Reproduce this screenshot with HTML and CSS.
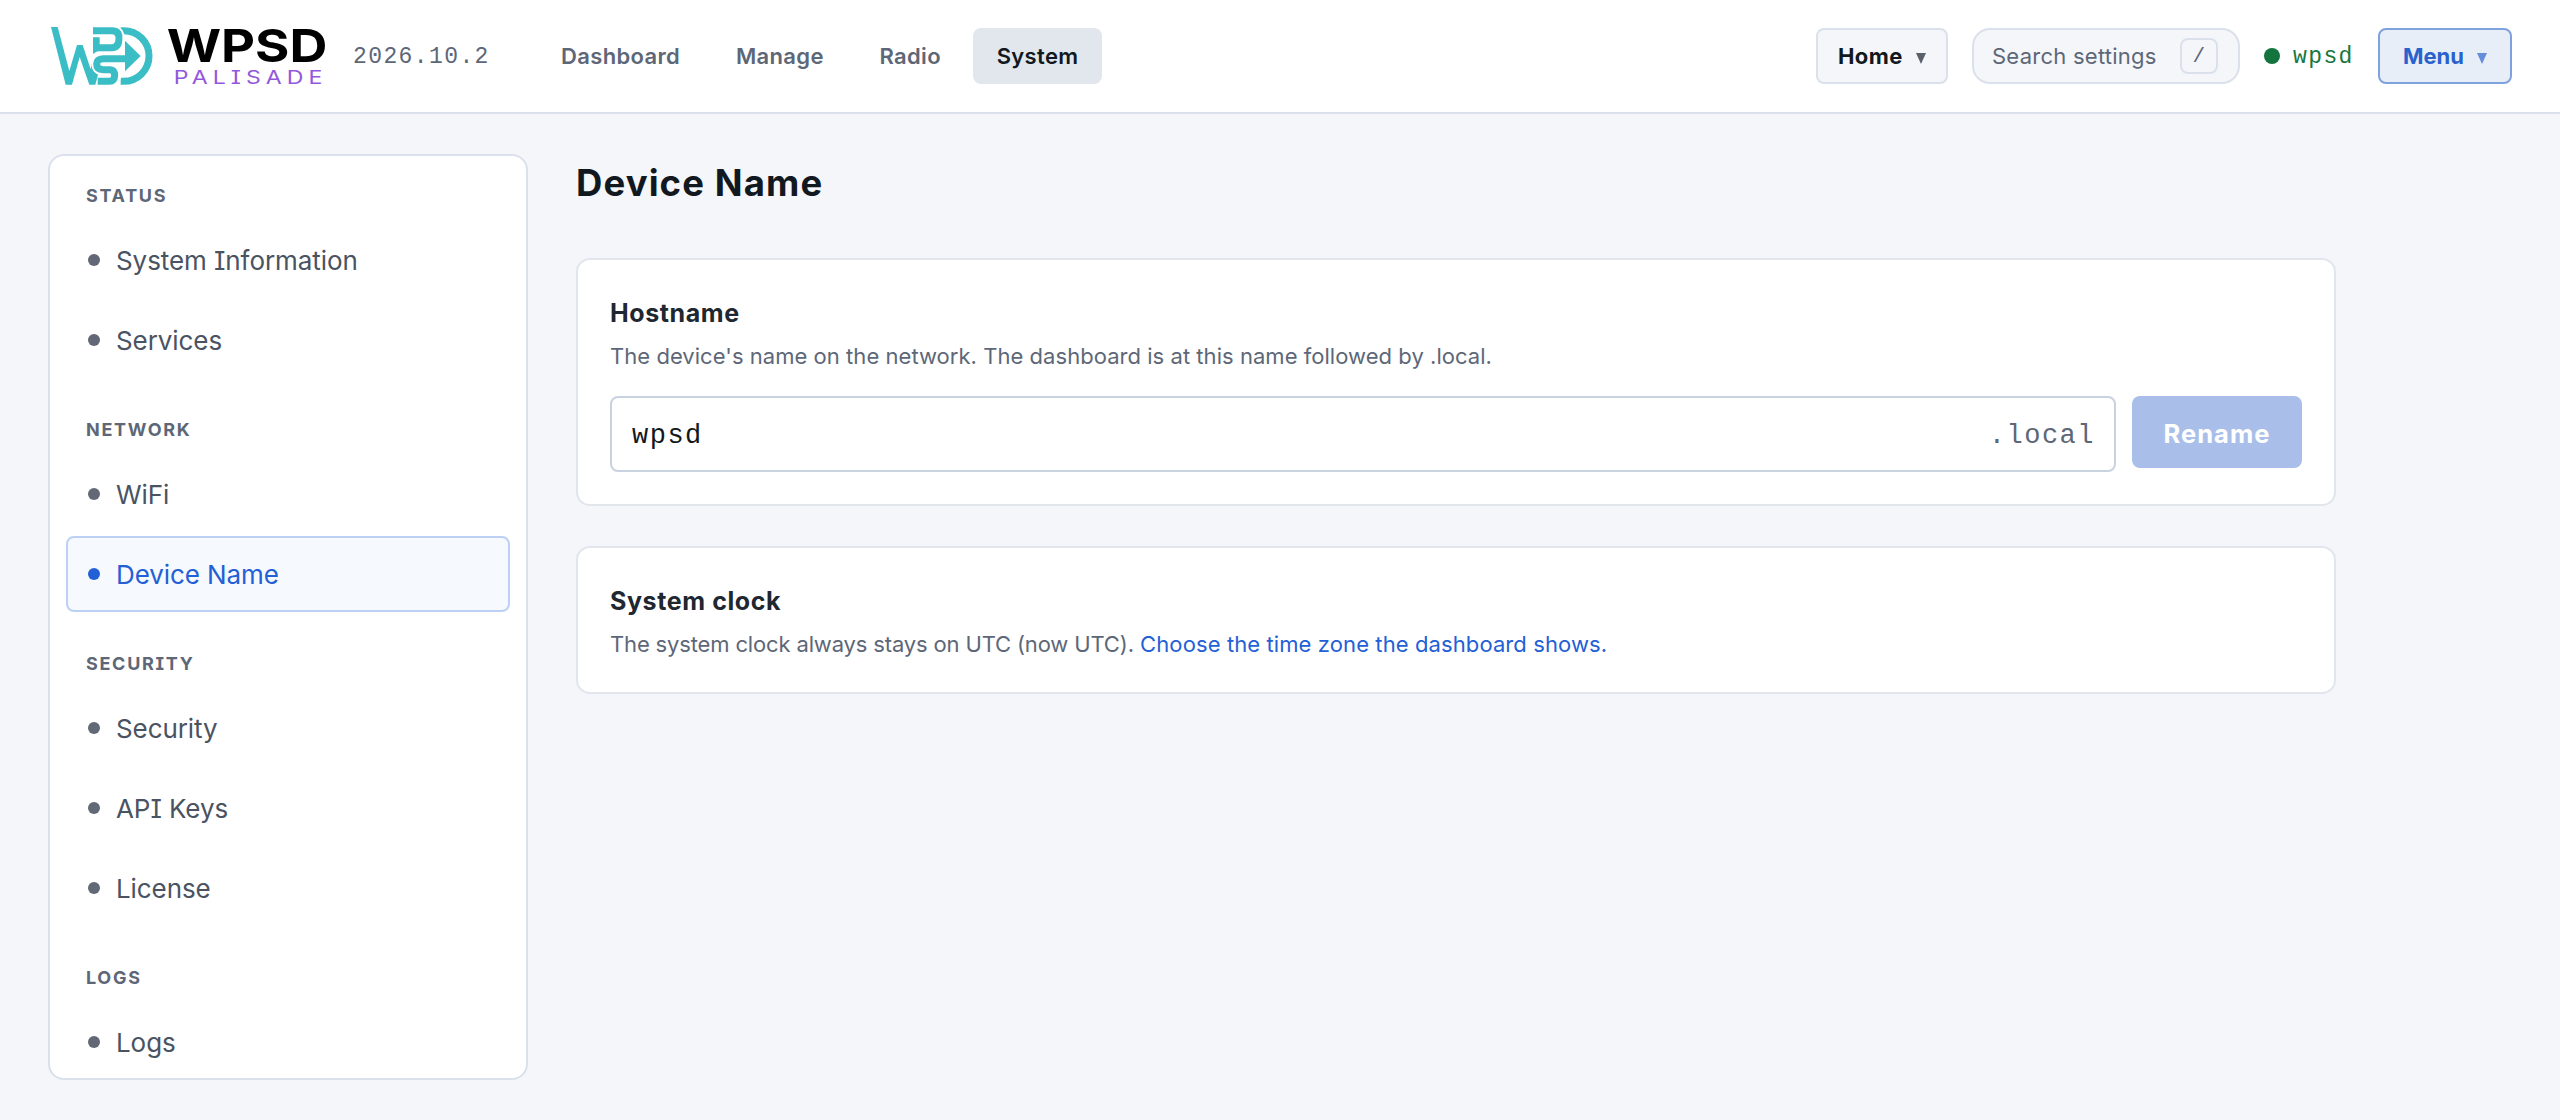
FILE: index.html
```
<!DOCTYPE html>
<html lang="en">
<head>
<meta charset="utf-8">
<title>Device Name</title>
<link rel="stylesheet" href="styles.css">
</head>
<body>
<header class="topbar">
  <svg class="logo" viewBox="54 45 840 186" role="img" aria-label="WPSD Palisade">
    <path class="mark-fill" d="M63 51H83L118 183 141 105H158L182 178 186 160 212 165 196 224H178L149 141 126 224H107Z"/>
    <path class="mark-line" d="M272 62H281A76 76 0 0 1 281 214H272"/>
    <path class="mark-gap" d="M189 62H246Q267 62 267 84Q267 113 246 113H205"/>
    <path class="mark-line" d="M189 62H246Q267 62 267 84Q267 113 246 113H205"/>
    <path class="mark-fill" d="M189 82H209V122Q197 124 189 132Z"/>
    <path class="mark-gap" d="M290 146H220Q201 147 201 161Q201 180 220 180H240Q257 181 257 196Q257 214 238 214H209"/>
    <path class="mark-gap-fill" d="M278 78L342 138 278 198Z"/>
    <path class="mark-line" d="M290 146H220Q200 147 200 162Q200 179 220 179H240Q254 180 254 196Q254 214 238 214H203"/>
    <path class="mark-fill" d="M285 92L332 138 285 184Z"/>
    <text class="logo-name" x="410" y="155" textLength="482" lengthAdjust="spacingAndGlyphs">WPSD</text>
    <text class="logo-edition" x="431" y="221" textLength="461" lengthAdjust="spacingAndGlyphs">PALISADE</text>
  </svg>
  <span class="version">2026.10.2</span>
  <nav class="nav">
    <a class="nav-link">Dashboard</a>
    <a class="nav-link">Manage</a>
    <a class="nav-link">Radio</a>
    <a class="nav-link active">System</a>
  </nav>
  <div class="tools">
    <button class="button home">Home<i class="caret"></i></button>
    <div class="search"><span>Search settings</span><kbd>/</kbd></div>
    <div class="host"><i class="host-dot"></i><span>wpsd</span></div>
    <button class="button menu">Menu<i class="caret"></i></button>
  </div>
</header>
<div class="layout">
  <aside class="sidebar">
    <h2>Status</h2>
    <a class="item">System Information</a>
    <a class="item">Services</a>
    <h2>Network</h2>
    <a class="item">WiFi</a>
    <a class="item current">Device Name</a>
    <h2>Security</h2>
    <a class="item">Security</a>
    <a class="item">API Keys</a>
    <a class="item">License</a>
    <h2>Logs</h2>
    <a class="item">Logs</a>
  </aside>
  <main class="content">
    <h1>Device Name</h1>
    <section class="card">
      <h3>Hostname</h3>
      <p>The device's name on the network. The dashboard is at this name followed by .local.</p>
      <div class="form">
        <div class="field"><span>wpsd</span><span class="suffix">.local</span></div>
        <button class="rename">Rename</button>
      </div>
    </section>
    <section class="card clock">
      <h3>System clock</h3>
      <p><span class="clock-note">The system clock always stays on UTC (now UTC).</span> <a>Choose the time zone the dashboard shows.</a></p>
    </section>
  </main>
</div>
</body>
</html>
```

FILE: styles.css
```
* { box-sizing: border-box; }
body {
  margin: 0;
  height: 1120px;
  overflow: hidden;
  background: #f4f6fa;
  color: #121820;
  font-family: Inter, "Liberation Sans", sans-serif;
  font-feature-settings: "cv08";
  font-size: 22px;
}
h1, h2, h3, p { margin: 0; }
button { font: inherit; font-feature-settings: inherit; }

.topbar {
  display: flex;
  align-items: center;
  height: 114px;
  padding: 0 48px;
  background: #fff;
  border-bottom: 2px solid #dae1ed;
}
.logo { width: 280px; height: 62px; flex: none; overflow: visible; }
.mark-fill { fill: #3abdc5; }
.mark-line { fill: none; stroke: #3abdc5; stroke-width: 21; }
.mark-gap { fill: none; stroke: #fff; stroke-width: 33; }
.mark-gap-fill { fill: #fff; }
.logo-name { font-size: 137px; font-weight: 700; fill: #000; }
.logo-edition { font-size: 55px; letter-spacing: 12px; fill: #9258dc; }
.version {
  margin-left: 25px;
  padding-top: 2px;
  width: 136px;
  font-family: "Liberation Mono", monospace;
  font-size: 23px;
  letter-spacing: 1.4px;
  color: #5d6777;
}
.nav { display: flex; gap: 8px; margin-left: 48px; }
.nav-link {
  height: 56px;
  padding: 0 23.7px 0 24px;
  line-height: 56px;
  border-radius: 8px;
  font-weight: 600;
  letter-spacing: 0.35px;
  color: #5d6777;
}
.nav-link.active { background: #e2e7ee; color: #121820; }

.tools { display: flex; align-items: center; gap: 24px; margin-left: auto; }
.button {
  display: flex;
  align-items: center;
  justify-content: space-between;
  height: 56px;
  padding: 0 20px;
  border: 2px solid #dae1ea;
  border-radius: 8px;
  background: #f4f6fa;
  color: #121820;
  font-weight: 700;
}
.home { width: 132px; letter-spacing: 0.4px; }
.menu { width: 134px; padding: 0 23px; border-color: #7fa1e0; background: #e8eef8; color: #2a62cd; }
.caret {
  margin-top: 5px;
  border: 5.5px solid transparent;
  border-top: 11px solid #5b616b;
  border-bottom: 0;
}
.menu .caret { border-top-color: #648dda; }
.search {
  display: flex;
  align-items: center;
  justify-content: space-between;
  width: 268px;
  height: 56px;
  padding: 0 20px 0 18px;
  border: 2px solid #dae1ea;
  border-radius: 18px;
  background: #f4f6fa;
  color: #5d6777;
  letter-spacing: 0.25px;
}
kbd {
  width: 38px;
  height: 36px;
  line-height: 34px;
  border: 2px solid #dae1ea;
  border-radius: 8px;
  text-align: center;
  font-family: "Liberation Mono", monospace;
  font-size: 21px;
}
.host {
  display: flex;
  align-items: center;
  gap: 13px;
  width: 90px;
  font-family: "Liberation Mono", monospace;
  font-size: 23px;
  letter-spacing: 1.4px;
  color: #17773f;
}
.host span { padding-top: 2px; }
.host-dot { flex: none; width: 16px; height: 16px; border-radius: 50%; background: #14743e; }

.layout { display: flex; gap: 48px; padding: 40px 48px; height: 1006px; }
.sidebar {
  width: 480px;
  height: 926px;
  flex: none;
  padding: 12px 16px 0;
  border: 2px solid #dae1ec;
  border-radius: 16px;
  background: #fff;
  overflow: hidden;
}
.sidebar h2 {
  height: 54px;
  margin-top: 24px;
  padding-left: 20px;
  line-height: 56px;
  font-size: 18px;
  letter-spacing: 1.7px;
  text-transform: uppercase;
  color: #5d6777;
}
.sidebar h2:first-child { margin-top: 0; }
.item {
  display: flex;
  align-items: center;
  gap: 16px;
  height: 76px;
  padding-left: 20px;
  border: 2px solid transparent;
  border-radius: 8px;
  font-size: 26px;
  letter-spacing: -0.08px;
  color: #4a5362;
}
.item + .item { margin-top: 4px; }
.item::before { content: ""; width: 12px; height: 12px; border-radius: 50%; background: #626875; }
.item.current { border-color: #bcd1f5; background: #f6f9fe; color: #2360d6; }
.item.current::before { background: #2360d6; }

.content { width: 1760px; }
h1 { height: 104px; line-height: 58px; font-size: 36.5px; letter-spacing: 1.1px; }
.card {
  height: 248px;
  padding: 32px;
  border: 2px solid #e1e6ed;
  border-radius: 14px;
  background: #fff;
}
.card h3 { height: 42px; line-height: 42px; font-size: 25px; letter-spacing: 0.6px; color: #202731; }
.card p { height: 44px; line-height: 44px; letter-spacing: 0.04px; color: #5d6777; }
.card a { color: #2360d6; letter-spacing: 0.1px; }
.clock { height: 148px; margin-top: 40px; }
.card .clock-note { letter-spacing: -0.15px; }
.form { display: flex; gap: 16px; padding-top: 18px; }
.field {
  display: flex;
  flex: 1;
  align-items: center;
  justify-content: space-between;
  height: 76px;
  padding: 4px 19px 0 20px;
  border: 2px solid #c9d2df;
  border-radius: 8px;
  font-family: "Liberation Mono", monospace;
  font-size: 27px;
  letter-spacing: 1.5px;
}
.suffix { color: #5d6777; }
.rename {
  width: 170px;
  height: 72px;
  padding: 2px 0 0;
  border: 0;
  border-radius: 8px;
  background: #a9bfe9;
  color: #fff;
  font-size: 25.5px;
  font-weight: 700;
  letter-spacing: 1px;
}
```
